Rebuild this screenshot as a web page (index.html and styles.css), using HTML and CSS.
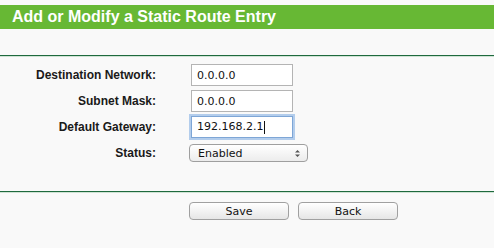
FILE: index.html
```html
<!DOCTYPE html>
<html>
  <head>
    <meta charset="utf-8" />
    <link rel="stylesheet" href="styles.css">
  </head>
  <body>
    <div class="title">Add or Modify a Static Route Entry</div>
    <div class="rule top"></div>

    <div class="form">
      <label class="label">Destination Network:</label>
      <input class="field" type="text" value="0.0.0.0" />

      <label class="label">Subnet Mask:</label>
      <input class="field" type="text" value="0.0.0.0" />

      <label class="label">Default Gateway:</label>
      <div class="field focus">192.168.2.1<span class="caret"></span></div>

      <label class="label status">Status:</label>
      <div class="select status">
        <span>Enabled</span>
        <svg width="7" height="9" viewBox="0 0 7 9">
          <path d="M1 3.5 L3.5 1 L6 3.5 Z M1 5.5 L3.5 8 L6 5.5 Z" fill="#555" />
        </svg>
      </div>
    </div>

    <div class="rule bottom"></div>

    <div class="buttons">
      <button class="btn">Save</button>
      <button class="btn">Back</button>
    </div>
  </body>
</html>
```

FILE: styles.css
```css
html, body {
  margin: 0;
  padding: 0;
  background-color: #f9f9f9;
}

body {
  padding-top: 5px;
  font-family: "Liberation Sans", Arial, sans-serif;
}

.title {
  height: 24px;
  line-height: 24px;
  padding-left: 12px;
  background-color: #67b834;
  color: #ffffff;
  font-size: 16px;
  font-weight: bold;
}

.rule {
  height: 1px;
  background-color: #1f6a3e;
  border-bottom: 1px solid #cfe3d4;
}
.rule.top {
  margin-top: 26px;
}
.rule.bottom {
  margin-top: 29px;
}

.form {
  display: grid;
  grid-template-columns: 156px 102px;
  column-gap: 35px;
  row-gap: 4px;
  align-items: center;
  margin-top: 7px;
}

.label {
  text-align: right;
  font-size: 12px;
  font-weight: bold;
  color: #1a1a1a;
}

.field {
  box-sizing: border-box;
  width: 102px;
  height: 22px;
  margin: 0;
  padding: 0 5px;
  border: 1px solid #b4b4b4;
  background: #ffffff;
  font-family: "DejaVu Sans", sans-serif;
  font-size: 11px;
  line-height: 20px;
  color: #111;
  outline: none;
}

.field.focus {
  display: flex;
  align-items: center;
  border-color: #7ea6d6;
  box-shadow: 0 0 0 2px #b3cdec;
}

.caret {
  display: inline-block;
  width: 1px;
  height: 13px;
  margin-left: 1px;
  background-color: #111;
}

.status {
  margin-top: 2px;
}

.select {
  box-sizing: border-box;
  width: 119px;
  height: 18px;
  margin-left: -2px;
  padding: 0 6px 0 8px;
  display: flex;
  align-items: center;
  justify-content: space-between;
  border: 1px solid #9f9f9f;
  border-radius: 4px;
  background: linear-gradient(#ffffff, #ececec);
  font-family: "DejaVu Sans", sans-serif;
  font-size: 11px;
  color: #111;
}

.buttons {
  display: flex;
  gap: 9px;
  margin-top: 9px;
  padding-left: 189px;
}

.btn {
  box-sizing: border-box;
  width: 100px;
  height: 18px;
  margin: 0;
  padding: 0;
  border: 1px solid #a0a0a0;
  border-radius: 4px;
  background: linear-gradient(#ffffff, #e6e6e6);
  font-family: "DejaVu Sans", sans-serif;
  font-size: 11px;
  color: #111;
}
```
